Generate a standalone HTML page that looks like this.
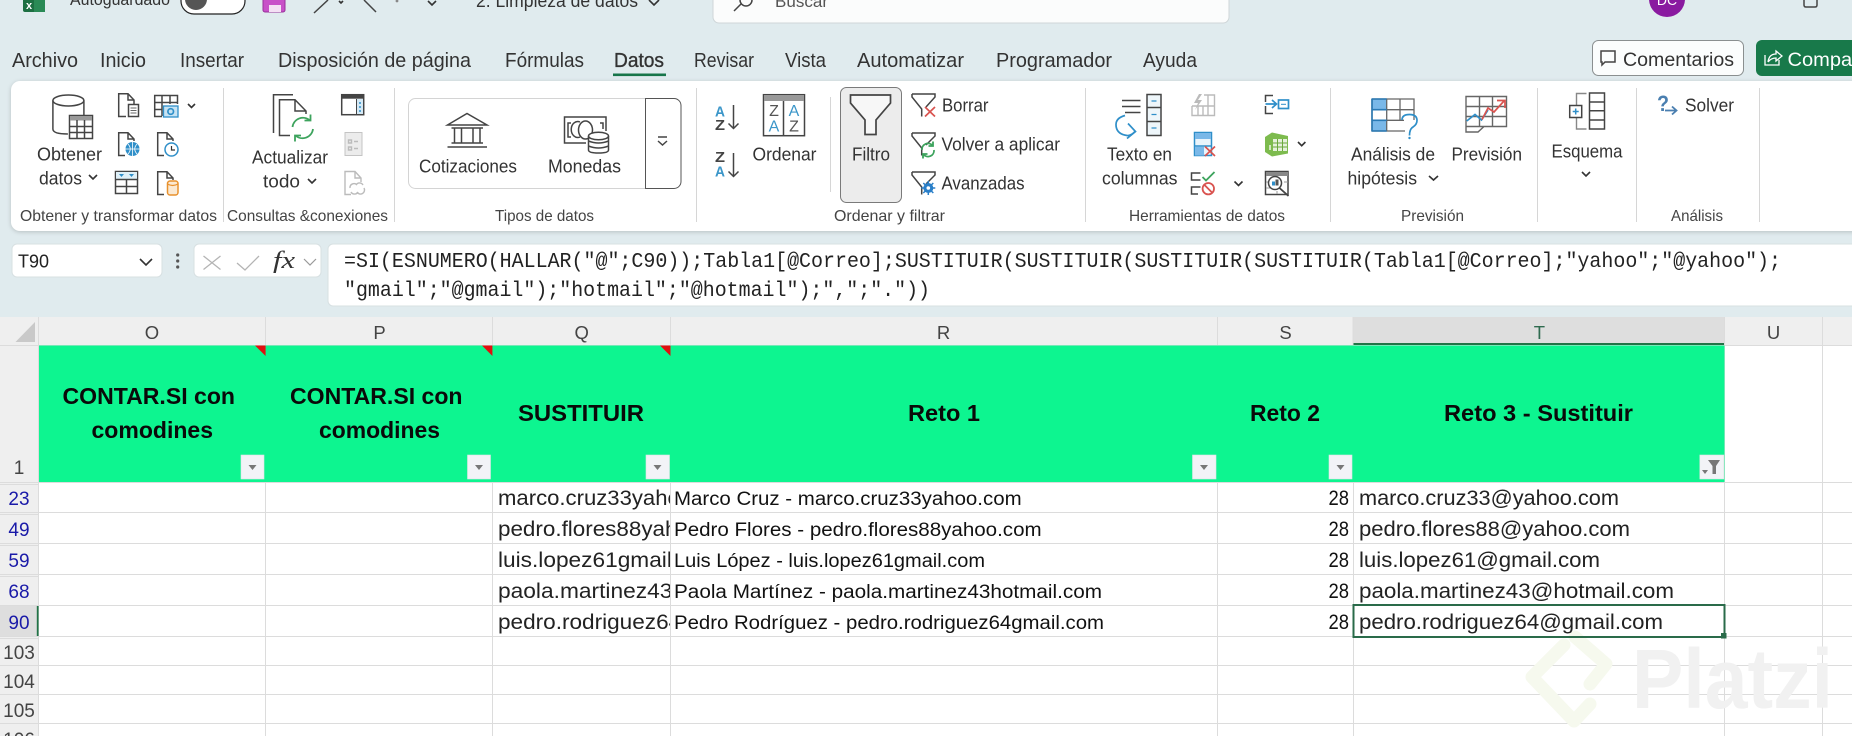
<!DOCTYPE html>
<html lang="es">
<head>
<meta charset="utf-8">
<title>Excel - Datos</title>
<style>
html,body{margin:0;padding:0;width:1852px;height:736px;overflow:hidden;background:#e0ebee}
svg{display:block;font-family:"Liberation Sans",sans-serif}
.tab{font-size:20px;fill:#333}
.btn{font-size:18px;fill:#333}
.grp{font-size:16px;fill:#444}
.mono{font-family:"Liberation Mono",monospace;font-size:21px;fill:#222}
.col{font-size:18.5px;fill:#444;text-anchor:middle}
.rh{font-size:19px;fill:#444;text-anchor:middle}
.rb{font-size:19px;fill:#1a1aa8;text-anchor:middle}
.hd{font-size:23px;font-weight:bold;fill:#0a0a0a}
.c{font-size:21px;fill:#222}
.r{font-size:19px;fill:#111}
.i{fill:none;stroke:#444;stroke-width:1.5}
.b{fill:none;stroke:#2f8fc9;stroke-width:1.7}
.g{fill:none;stroke:#3da35d;stroke-width:1.8}
.ch{fill:none;stroke:#333;stroke-width:1.6}
.gy{fill:none;stroke:#bbb;stroke-width:1.4}
.rd{fill:none;stroke:#d9534f;stroke-width:1.7}
.grid{stroke:#dcdcdc;stroke-width:1}
</style>
</head>
<body>
<svg width="1852" height="736" viewBox="0 0 1852 736" xmlns="http://www.w3.org/2000/svg">
<defs>
<clipPath id="qc"><rect x="493" y="483" width="177" height="155"/></clipPath>
</defs>
<rect width="1852" height="736" fill="#e0ebee"/>

<!-- Title bar -->
<rect x="23" y="-8" width="22" height="20" rx="2" fill="#1d6f42"/>
<rect x="34" y="-8" width="11" height="20" fill="#2a8a55"/>
<text x="26" y="9" font-size="11" font-weight="bold" fill="#fff">x</text>
<text x="70" y="5" font-size="17" fill="#333" textLength="100" lengthAdjust="spacingAndGlyphs">Autoguardado</text>
<rect x="181" y="-12" width="64" height="26" rx="13" fill="#fff" stroke="#222" stroke-width="1.2"/>
<circle cx="196" cy="-1" r="11" fill="#555"/>
<rect x="263" y="-8" width="22" height="20" rx="2" fill="#c850c8" stroke="#98309a"/>
<rect x="269" y="5" width="12" height="7" fill="#f4e0f4"/>
<path class="i" d="M314 13L328 0M364 0L376 12"/>
<path class="ch" d="M339 1l2 2 2-2"/>
<circle cx="397" cy="1" r="1.4" fill="#888"/>
<path class="ch" d="M428 1l4 4 4-4"/>
<text x="476" y="7" font-size="18" fill="#333" textLength="162" lengthAdjust="spacingAndGlyphs">2. Limpieza de datos</text>
<path class="ch" d="M649 0l5 5 5-5"/>
<rect x="713" y="-12" width="516" height="35" rx="6" fill="#fbfcfc" stroke="#cfd6d8"/>
<path class="i" d="M734 11l7-7"/><circle cx="746" cy="0" r="6" class="i"/>
<text x="775" y="7" font-size="17" fill="#555" textLength="53" lengthAdjust="spacingAndGlyphs">Buscar</text>
<circle cx="1667" cy="-1" r="18" fill="#8a1aa0"/>
<text x="1667" y="5" font-size="14" fill="#fff" text-anchor="middle">DC</text>
<path class="i" d="M1804 0v5q0 2 2 2h9q2 0 2-2v-5"/>

<!-- Tabs -->
<text class="tab" x="12" y="67" textLength="66" lengthAdjust="spacingAndGlyphs">Archivo</text>
<text class="tab" x="100" y="67" textLength="46" lengthAdjust="spacingAndGlyphs">Inicio</text>
<text class="tab" x="180" y="67" textLength="64" lengthAdjust="spacingAndGlyphs">Insertar</text>
<text class="tab" x="278" y="67" textLength="193" lengthAdjust="spacingAndGlyphs">Disposición de página</text>
<text class="tab" x="505" y="67" textLength="79" lengthAdjust="spacingAndGlyphs">Fórmulas</text>
<text class="tab" x="614" y="67" textLength="50" lengthAdjust="spacingAndGlyphs" stroke="#333" stroke-width=".35">Datos</text>
<rect x="613" y="73.5" width="53" height="2.6" fill="#17754a"/>
<text class="tab" x="694" y="67" textLength="60" lengthAdjust="spacingAndGlyphs">Revisar</text>
<text class="tab" x="785" y="67" textLength="41" lengthAdjust="spacingAndGlyphs">Vista</text>
<text class="tab" x="857" y="67" textLength="107" lengthAdjust="spacingAndGlyphs">Automatizar</text>
<text class="tab" x="996" y="67" textLength="116" lengthAdjust="spacingAndGlyphs">Programador</text>
<text class="tab" x="1143" y="67" textLength="54" lengthAdjust="spacingAndGlyphs">Ayuda</text>

<!-- Comments / share -->
<rect x="1592.5" y="40.5" width="151" height="35" rx="6" fill="#fbfdfd" stroke="#8a8f90"/>
<path class="i" d="M1601 51h14v11h-10l-3 3v-3h-1z"/>
<text x="1623" y="66" font-size="19" fill="#333" textLength="111" lengthAdjust="spacingAndGlyphs">Comentarios</text>
<rect x="1756" y="40" width="110" height="36" rx="6" fill="#18794a"/>
<path d="M1765 55v10h14v-5M1768 62q1-8 8-8v-3l6 5-6 5v-3q-5 0-8 4" fill="none" stroke="#fff" stroke-width="1.3"/>
<text x="1787.5" y="66" font-size="19" fill="#fff" textLength="88" lengthAdjust="spacingAndGlyphs">Compartir</text>

<!-- Ribbon panel -->
<rect x="11" y="81" width="1860" height="150" rx="9" fill="#fff" style="filter:drop-shadow(0 1px 2px rgba(0,0,0,.18))"/>
<g stroke="#d6d6d6" stroke-width="1">
<path d="M223.5 88V222M394.5 88V222M696.5 88V222M1085.5 88V222M1330.5 88V222M1537.5 88V222M1636.5 88V222M1759.5 88V222M830.5 97V192"/>
</g>

<!-- Group labels -->
<text class="grp" x="20" y="221" textLength="197" lengthAdjust="spacingAndGlyphs">Obtener y transformar datos</text>
<text class="grp" x="227" y="221" textLength="161" lengthAdjust="spacingAndGlyphs">Consultas &amp;conexiones</text>
<text class="grp" x="495" y="221" textLength="99" lengthAdjust="spacingAndGlyphs">Tipos de datos</text>
<text class="grp" x="834" y="221" textLength="111" lengthAdjust="spacingAndGlyphs">Ordenar y filtrar</text>
<text class="grp" x="1129" y="221" textLength="156" lengthAdjust="spacingAndGlyphs">Herramientas de datos</text>
<text class="grp" x="1401" y="221" textLength="63" lengthAdjust="spacingAndGlyphs">Previsión</text>
<text class="grp" x="1671" y="221" textLength="52" lengthAdjust="spacingAndGlyphs">Análisis</text>

<!-- Button labels -->
<text class="btn" x="37" y="160.500" textLength="65" lengthAdjust="spacingAndGlyphs">Obtener</text>
<text class="btn" x="39" y="184.500" textLength="43" lengthAdjust="spacingAndGlyphs">datos</text>
<path class="ch" d="M89 175l4 4 4-4"/>
<text class="btn" x="252" y="163.500" textLength="76" lengthAdjust="spacingAndGlyphs">Actualizar</text>
<text class="btn" x="263" y="187.500" textLength="37" lengthAdjust="spacingAndGlyphs">todo</text>
<path class="ch" d="M308 179l4 4 4-4"/>

<rect x="408.5" y="98.5" width="272" height="90" rx="7" fill="#fff" stroke="#d4d4d4"/>
<path d="M645.5 98.5H674a7 7 0 0 1 7 7V181.500a7 7 0 0 1-7 7H645.5z" fill="#fff" stroke="#555"/>
<path class="i" d="M658 137h9M658 141l4.500 4 4.500-4"/>
<text class="btn" x="419" y="172.500" textLength="98" lengthAdjust="spacingAndGlyphs">Cotizaciones</text>
<text class="btn" x="548" y="172.500" textLength="73" lengthAdjust="spacingAndGlyphs">Monedas</text>

<text class="btn" x="752.500" y="160.500" textLength="64" lengthAdjust="spacingAndGlyphs">Ordenar</text>
<rect x="840.500" y="87.500" width="61" height="115" rx="6" fill="#ececec" stroke="#7a7a7a"/>
<text class="btn" x="852" y="160.500" textLength="38" lengthAdjust="spacingAndGlyphs">Filtro</text>
<text class="btn" x="942" y="111.500" textLength="46.500" lengthAdjust="spacingAndGlyphs">Borrar</text>
<text class="btn" x="941.500" y="150.500" textLength="118.500" lengthAdjust="spacingAndGlyphs">Volver a aplicar</text>
<text class="btn" x="941.500" y="189.500" textLength="83" lengthAdjust="spacingAndGlyphs">Avanzadas</text>
<text class="btn" x="1107" y="160.500" textLength="65" lengthAdjust="spacingAndGlyphs">Texto en</text>
<text class="btn" x="1102" y="184.500" textLength="75.500" lengthAdjust="spacingAndGlyphs">columnas</text>
<text class="btn" x="1351" y="160.500" textLength="84" lengthAdjust="spacingAndGlyphs">Análisis de</text>
<text class="btn" x="1347.500" y="184.500" textLength="69.500" lengthAdjust="spacingAndGlyphs">hipótesis</text>
<path class="ch" d="M1429 176l4.500 4 4.500-4"/>
<text class="btn" x="1451.500" y="160.500" textLength="70.500" lengthAdjust="spacingAndGlyphs">Previsión</text>
<text class="btn" x="1551.500" y="157.500" textLength="71" lengthAdjust="spacingAndGlyphs">Esquema</text>
<path class="ch" d="M1582 172l4 4 4-4"/>
<text class="btn" x="1685" y="111.500" textLength="49" lengthAdjust="spacingAndGlyphs">Solver</text>

<!-- Obtener datos icon -->
<ellipse cx="68.400" cy="100.500" rx="15.500" ry="5.500" class="i"/>
<path class="i" d="M52.900 100.500V129q0 5 15 5M83.900 100.500V115"/>
<rect x="69.500" y="115.500" width="23" height="23" fill="#fff" stroke="#444" stroke-width="1.500"/>
<rect x="70" y="116" width="22" height="4.500" fill="#999"/>
<path class="i" d="M70 126.500H92M70 132.500H92M77 120V138M84.500 120V138"/>

<!-- Small data icons -->
<path class="i" d="M126 116.500H118.700V93.700H128L134 100V104"/>
<path class="i" d="M128 93.700V100H134"/>
<rect x="128.500" y="104.500" width="10" height="12" class="i"/>
<path d="M130.500 108h6M130.500 110.500h6M130.500 113h6" stroke="#666" fill="none"/>

<path class="i" d="M162 116.500H154.700V95.500H177.500V104M154.700 102.500H177.500M162 95.500V116M170 95.500V104M154.700 109.500H162"/>
<rect x="163.500" y="106" width="14.500" height="11" fill="#c7e3f3" stroke="#2f8fc9" stroke-width="1.300"/>
<circle cx="170.700" cy="111.500" r="2.800" class="b"/>
<path class="ch" d="M188 104l3.500 3.500 3.500-3.500"/>

<path class="i" d="M125 155.500H118.700V132.700H128L134 139V141M128 132.700V139H134"/>
<circle cx="132.500" cy="149" r="7" fill="#2f8fc9"/>
<path d="M125.500 149h14M132.500 142v14M128 144q4.500 5 0 10M137 144q-4.500 5 0 10" fill="none" stroke="#fff" stroke-width=".8"/>

<path class="i" d="M164 155.500H157.700V132.700H167L173 139V141M167 132.700V139H173"/>
<circle cx="171.500" cy="149.500" r="6.500" fill="#fff" stroke="#2f8fc9" stroke-width="1.500"/>
<path d="M171.500 146v4h3.500" fill="none" stroke="#333" stroke-width="1.200"/>

<rect x="115.500" y="171.500" width="22" height="22" class="i"/>
<rect x="116" y="172" width="21" height="7" fill="#dff0f8"/>
<path d="M119 174h5l-2.500 3zM129 174h5l-2.500 3z" fill="#2f8fc9"/>
<path class="i" d="M115.500 179.500H137.500M115.500 186.500H137.500M126.500 179.500V193.500"/>

<path class="i" d="M164 194.500H157.700V171.700H167L173 178V180M167 171.700V178H173"/>
<rect x="167.500" y="181" width="10.500" height="14" rx="2.500" fill="#fbe9d2" stroke="#e8912d" stroke-width="1.500"/>
<path d="M167.500 184q5 3 10.500 0" fill="none" stroke="#e8912d" stroke-width="1.200"/>

<!-- Actualizar icon -->
<path class="i" d="M293 94.700H273.500V133"/>
<path class="i" d="M290 135.500H279.500V99.700H295L306 111V114M295 99.700V111H306"/>
<path class="g" d="M292.500 127A10.500 10.500 0 0 1 310 120.500M313 129A10.500 10.500 0 0 1 295.500 135.500"/>
<path class="g" d="M310.500 114.500V120.500H304.500M295 141.500V135.500H301"/>
<rect x="341.700" y="94.700" width="22" height="20" class="i"/>
<rect x="341.700" y="94.700" width="22" height="4" fill="#444"/>
<path d="M356.500 99V114" stroke="#444" fill="none"/>
<rect x="357" y="99" width="6" height="15" fill="#d5e9f5"/>
<path d="M360 102v2M360 106v2M360 110v2" stroke="#2f8fc9" stroke-width="1.500" fill="none"/>
<rect x="345" y="132.500" width="17" height="23" fill="#ececec" stroke="#c4c4c4"/>
<path class="gy" d="M348.500 140h3v3h-3zM348.500 147h3v3h-3zM354 141.500h4M354 148.500h4"/>
<path class="gy" d="M351 194.500H345V171.500H355L361 178V182M355 171.500V178H361"/>
<path class="gy" d="M350 188a4 4 0 0 1 7-3M364 188a4 4 0 0 1-7 4M356 185a4 4 0 0 1 7 0M358 192a4 4 0 0 1-7 0"/>

<!-- Temple -->
<path class="i" d="M447.500 125L467 113.500L487 125H447.500Z" stroke-width="1.700"/>
<path class="i" d="M451.500 128H483M454.500 128V143M461.500 128V143M473 128V143M480 128V143M451.500 143H483M447.500 147H487" stroke-width="1.700"/>

<!-- Monedas -->
<path class="i" d="M586 143H564.500V117H606V131"/>
<path class="i" d="M571 123H568V137H571M600 123H603V129M580 122a6.500 8 0 1 0 0 15"/>
<ellipse cx="585.500" cy="130" rx="7" ry="9" class="i"/>
<ellipse cx="598.500" cy="136" rx="10" ry="3.800" fill="#fff" stroke="#444" stroke-width="1.500"/>
<path class="i" d="M588.500 136V150q0 3 10 3t10-3V136M588.500 141q10 4 20 0M588.500 146q10 4 20 0" fill="#fff"/>

<!-- Sort -->
<text x="715" y="116.500" font-size="15" font-weight="bold" fill="#3b96c9" textLength="10" lengthAdjust="spacingAndGlyphs">A</text>
<text x="715" y="130" font-size="15" font-weight="bold" fill="#444" textLength="10" lengthAdjust="spacingAndGlyphs">Z</text>
<path class="i" d="M733.500 105V128.500M728.500 123.500L733.500 128.500L738.500 123.500"/>
<text x="715" y="162" font-size="15" font-weight="bold" fill="#444" textLength="10" lengthAdjust="spacingAndGlyphs">Z</text>
<text x="715" y="176.500" font-size="15" font-weight="bold" fill="#3b96c9" textLength="10" lengthAdjust="spacingAndGlyphs">A</text>
<path class="i" d="M733.500 153V176.500M728.500 171.500L733.500 176.500L738.500 171.500"/>

<rect x="763.500" y="94.700" width="41" height="41" fill="#fff" stroke="#444" stroke-width="1.500"/>
<rect x="764" y="95" width="40" height="6" fill="#999"/>
<path d="M783.500 101V135" stroke="#444" stroke-width="1.500"/>
<g font-size="16" text-anchor="middle">
<text x="774" y="116" fill="#555">Z</text><text x="774" y="131.500" fill="#3b96c9">A</text>
<text x="794" y="116" fill="#3b96c9">A</text><text x="794" y="131.500" fill="#555">Z</text>
</g>

<!-- Funnels -->
<path d="M850.500 95H890.500V103L876 120V134.500H865V120L850.500 103Z" fill="#f7f7f7" stroke="#444" stroke-width="1.700"/>
<g class="i">
<path d="M912 94H935V97L926 107M912 94V97L921.700 109V116.500"/>
<path d="M912 133H935V136L926 145M912 133V136L921.700 148V155.500"/>
<path d="M912 172H935V175L926 184M912 172V175L921.700 187V194.500"/>
</g>
<path class="rd" d="M925 107L935 116.500M935 107L925 116.500"/>
<path class="g" d="M922 150A6 6 0 0 1 932.500 145.500M934 150A6 6 0 0 1 923.500 154.500M933 141.500V146H928.500M923 158.500V154H927.500"/>
<circle cx="928.300" cy="188" r="3.500" fill="none" stroke="#2a7fc8" stroke-width="3"/>
<path d="M928.300 181v14M921.300 188h14M923.300 183l10 10M933.300 183l-10 10" stroke="#2a7fc8" stroke-width="1.500"/>
<circle cx="928.300" cy="188" r="1.800" fill="#fff"/>

<!-- Texto en columnas -->
<path class="i" d="M1122 100.500H1140.500M1122 106.500H1140.500M1125 112.500H1140.500"/>
<rect x="1147" y="94.500" width="14" height="41" fill="#eef6fa" stroke="#444" stroke-width="1.500"/>
<path class="i" d="M1147 107.500H1161M1147 121.500H1161"/>
<path d="M1151.500 101h5M1151.500 114.500h5M1151.500 128h5" stroke="#2f8fc9" stroke-width="1.300"/>
<path class="b" d="M1125 115.500Q1116 118 1116 124.500Q1116 134 1127 135.500Q1131 136 1135 131.500M1128 123.500L1135.500 131.500L1127 138.500"/>

<!-- Flash fill -->
<path class="gy" d="M1204 95H1214.500V115.500H1192V106M1192 106H1214.500M1203 106V115.500M1208 95V115.500M1198 106V115.500" stroke-width="1.500"/>
<path d="M1199 94l-5 9h4l-3 7 7-10h-4l4-6z" fill="#bbb"/>

<!-- Remove duplicates -->
<rect x="1194.500" y="132.500" width="17" height="23" fill="#eaf4fb" stroke="#2f8fc9" stroke-width="1.500"/>
<rect x="1195" y="133" width="16" height="6" fill="#7ab8e8"/>
<path d="M1195 146h16" stroke="#2f8fc9" stroke-width="1.500"/>
<rect x="1195" y="146.500" width="9" height="9" fill="#7ab8e8"/>
<path class="rd" d="M1205 146.500L1215 156M1215 146.500L1205 156"/>

<!-- Validation -->
<path class="i" d="M1200.500 173H1191.500V180H1200.500M1200.500 187H1191.500V194H1198"/>
<path class="g" d="M1202.500 177L1206 180.500L1214.500 172"/>
<circle cx="1208.300" cy="188.700" r="5.700" fill="none" stroke="#d9534f" stroke-width="1.800"/>
<path d="M1204.500 185L1212 192.500" stroke="#d9534f" stroke-width="1.800"/>
<path class="ch" d="M1234.500 181.500l4 4 4-4"/>

<!-- Consolidate -->
<path class="i" d="M1273 95.500H1265.500V102M1265.500 106V113.500H1273"/>
<path class="b" d="M1265.500 104H1276M1272 100L1276.500 104L1272 108"/>
<rect x="1278.500" y="100" width="10" height="8.500" class="b"/>
<path d="M1281 104.300h5" stroke="#2f8fc9"/>

<!-- Data model -->
<path d="M1272 132.500L1288 136V153.500L1272 156.500L1265 152V137Z" fill="#7dbb4e"/>
<rect x="1273" y="139" width="14" height="12" fill="#fff" opacity=".8"/>
<path d="M1277.500 139v12M1282.500 139v12M1273 143h14M1273 147h14" stroke="#6aa83c"/>
<path d="M1270 145v5" stroke="#fff" stroke-width="1.300"/>
<path class="ch" d="M1298 142l3.700 3.700 3.700-3.700"/>

<!-- Relationships -->
<rect x="1265.500" y="171.500" width="22.500" height="23" class="i"/>
<rect x="1266" y="172" width="22" height="4" fill="#888"/>
<path d="M1266 182h4M1266 188h4M1284 182h4M1277 191v3" stroke="#999"/>
<circle cx="1275" cy="183" r="6.500" fill="#fff" stroke="#444" stroke-width="1.500"/>
<rect x="1272" y="181.500" width="3" height="4" fill="#2f8fc9"/><rect x="1275.500" y="179.500" width="3" height="6" fill="#555"/>
<path d="M1279.500 188L1288.500 196" stroke="#444" stroke-width="1.800"/>

<!-- What-if -->
<path d="M1372 99H1386.700V109.700H1372ZM1372 120.300H1386.700V131H1372Z" fill="#7ab8e8"/>
<path d="M1372 99H1414V120M1372 99V131H1405M1372 109.700H1414M1372 120.300H1404M1386.700 99V131M1400 99V120" fill="none" stroke="#666" stroke-width="1.300"/>
<path d="M1372 98.500V131.500M1372 99H1386.700M1372 131H1386.700M1372 109.700H1386.700M1372 120.300H1386.700" fill="none" stroke="#2a7ab5" stroke-width="1.600"/>
<path class="b" d="M1402 120Q1402 114.500 1409.500 114.500Q1417 114.500 1417 120.500Q1417 124.500 1413 127Q1409.500 129 1409.500 135.500" stroke-width="2"/>
<circle cx="1409.500" cy="138" r="1.200" fill="#2f8fc9"/>

<!-- Forecast -->
<path d="M1477 126.500H1506.500V96.500H1466V132H1478L1484 126.500M1466 126.500H1484M1466 106.500H1506.500M1466 116.500H1506.500M1479.500 96.500V126.500M1492.500 96.500V126.500" fill="none" stroke="#666" stroke-width="1.400"/>
<path class="b" d="M1466.700 121L1475 114.500L1481.500 120L1488 110"/>
<path class="rd" d="M1482 119.500L1488 108L1494 112L1504 101M1497 100.500H1505V108"/>

<!-- Outline -->
<path d="M1586.500 93.500H1576.500V105M1576.500 117.500V129H1586.500" fill="none" stroke="#888" stroke-width="1.400"/>
<rect x="1569.700" y="105.500" width="12" height="12" fill="#fff" stroke="#444" stroke-width="1.500"/>
<path d="M1572.700 111.500h6M1575.700 108.500v6" stroke="#2f8fc9" stroke-width="1.500"/>
<rect x="1589.500" y="93" width="15" height="36" class="i"/>
<path class="i" d="M1589.500 102H1604.500M1589.500 110.700H1604.500M1589.500 120H1604.500"/>

<!-- Solver -->
<text x="1657" y="111" font-size="22" font-weight="bold" fill="#4a7fb0" textLength="12" lengthAdjust="spacingAndGlyphs">?</text>
<path d="M1665 110.500H1676M1672 106.500L1676.500 110.500L1672 114.500" fill="none" stroke="#4a7fb0" stroke-width="1.800"/>

<!-- Formula bar -->
<rect x="12" y="244" width="150" height="33" rx="5" fill="#fff" stroke="#d7e0e2"/>
<text x="18" y="267.500" font-size="18" fill="#222" textLength="31" lengthAdjust="spacingAndGlyphs">T90</text>
<path class="ch" d="M140 259l6 6 6-6"/>
<g fill="#555"><circle cx="177.700" cy="255" r="1.600"/><circle cx="177.700" cy="261" r="1.600"/><circle cx="177.700" cy="267" r="1.600"/></g>
<rect x="194" y="244" width="127" height="33" rx="5" fill="#fff" stroke="#d7e0e2"/>
<path d="M203.500 256L220.500 269.500M220.500 256L203.500 269.500M237 263L245 270L259 256" fill="none" stroke="#b4b4b4" stroke-width="1.300"/>
<text x="273" y="268" font-family="Liberation Serif,serif" font-style="italic" font-size="24" fill="#333" textLength="22" lengthAdjust="spacingAndGlyphs">fx</text>
<path d="M304 259l6 6 6-6" fill="none" stroke="#999" stroke-width="1.200"/>
<rect x="328" y="244" width="1540" height="62" rx="5" fill="#fff" stroke="#d7e0e2"/>
<text class="mono" x="344" y="267" textLength="1437" lengthAdjust="spacingAndGlyphs">=SI(ESNUMERO(HALLAR("@";C90));Tabla1[@Correo];SUSTITUIR(SUSTITUIR(SUSTITUIR(SUSTITUIR(Tabla1[@Correo];"yahoo";"@yahoo");</text>
<text class="mono" x="344" y="296" textLength="586" lengthAdjust="spacingAndGlyphs">"gmail";"@gmail");"hotmail";"@hotmail");",";"."))</text>

<!-- Sheet -->
<rect x="0" y="317" width="1852" height="419" fill="#fff"/>
<rect x="0" y="317" width="1852" height="28" fill="#efefef"/>
<rect x="0" y="317" width="38" height="419" fill="#efefef"/>
<path d="M35 322V342H15.500Z" fill="#c9c9c9"/>
<rect x="1353" y="317" width="371.500" height="28" fill="#dedede"/>
<rect x="1353" y="343" width="371.500" height="2.200" fill="#217346"/>

<!-- gridlines -->
<g class="grid">
<path d="M38.500 317V736M265.500 317V345M492.500 317V345M670.500 317V345M1217.500 317V345M1353 317V345M1724.500 317V736M1822.500 317V736"/>
<path d="M265.500 482V736M492.500 482V736M670.500 482V736M1217.500 482V736M1353.500 482V736"/>
<path d="M0 345.500H1852M0 482.500H1852M0 512.500H1852M0 543.500H1852M0 574.500H1852M0 605.500H1852M0 636.500H1852M0 665.500H1852M0 694.500H1852M0 723.500H1852"/>
<path d="M0 484.500H38M0 514.500H38M0 545.500H38M0 576.500H38M0 607.500H38M0 638.500H38"/>
</g>
<rect x="0" y="606" width="37" height="30" fill="#dedede"/>
<rect x="36.800" y="606" width="1.800" height="30" fill="#217346"/>

<!-- Watermark -->
<path d="M1575 637L1606 664L1590 684M1564 645L1532 677L1574 721L1590 704" fill="none" stroke="#f6f9ee" stroke-width="13" stroke-linejoin="round" stroke-linecap="round"/>
<text x="1632" y="708" font-size="84" font-weight="bold" fill="#f1f1f1" textLength="201" lengthAdjust="spacingAndGlyphs">Platzi</text>

<!-- Green header row -->
<rect x="39" y="345.500" width="1685.500" height="136.500" fill="#0df590"/>
<path d="M255 345.500H265.600V356Z" fill="#e01010"/>
<path d="M482 345.500H492.400V356Z" fill="#e01010"/>
<path d="M660 345.500H670.500V356Z" fill="#e01010"/>

<g>
<text class="hd" x="62.500" y="404" textLength="172.500" lengthAdjust="spacingAndGlyphs">CONTAR.SI con</text>
<text class="hd" x="91.500" y="438" textLength="121.500" lengthAdjust="spacingAndGlyphs">comodines</text>
<text class="hd" x="290" y="404" textLength="172.500" lengthAdjust="spacingAndGlyphs">CONTAR.SI con</text>
<text class="hd" x="319" y="438" textLength="121" lengthAdjust="spacingAndGlyphs">comodines</text>
<text class="hd" x="518" y="421" textLength="126" lengthAdjust="spacingAndGlyphs">SUSTITUIR</text>
<text class="hd" x="908" y="421" textLength="72" lengthAdjust="spacingAndGlyphs">Reto 1</text>
<text class="hd" x="1250" y="421" textLength="70" lengthAdjust="spacingAndGlyphs">Reto 2</text>
<text class="hd" x="1444" y="421" textLength="189" lengthAdjust="spacingAndGlyphs">Reto 3 - Sustituir</text>
</g>

<!-- Filter buttons -->
<g fill="#f2f3f7" stroke="#dfe3e6" stroke-width=".6">
<rect x="241" y="455" width="23" height="24"/>
<rect x="467.500" y="455" width="23" height="24"/>
<rect x="646" y="455" width="23.500" height="24"/>
<rect x="1192.500" y="455" width="23.500" height="24"/>
<rect x="1329" y="455" width="23" height="24"/>
<rect x="1699.800" y="455" width="24" height="24"/>
</g>
<g fill="#777">
<path d="M248.500 465h8l-4 5zM475 465h8l-4 5zM653.500 465h8l-4 5zM1200 465h8l-4 5zM1336.500 465h8l-4 5z"/>
<path d="M1708 460H1720L1716 466V474H1712.500V466ZM1702 470H1708L1705 474Z"/>
</g>

<!-- Column headers -->
<text class="col" x="152" y="339">O</text>
<text class="col" x="379.500" y="339">P</text>
<text class="col" x="581.700" y="339">Q</text>
<text class="col" x="943.600" y="339">R</text>
<text class="col" x="1285.600" y="339">S</text>
<text class="col" x="1539.400" y="339" style="fill:#2f6b4f">T</text>
<text class="col" x="1773.500" y="339">U</text>

<!-- Row headers -->
<text class="rh" x="19" y="474">1</text>
<text class="rb" x="19" y="505">23</text>
<text class="rb" x="19" y="536">49</text>
<text class="rb" x="19" y="567">59</text>
<text class="rb" x="19" y="598">68</text>
<text class="rb" x="19" y="629">90</text>
<text class="rh" x="19" y="659">103</text>
<text class="rh" x="19" y="688">104</text>
<text class="rh" x="19" y="717">105</text>
<text class="rh" x="19" y="746">106</text>

<!-- Q column (clipped) -->
<g clip-path="url(#qc)">
<text class="c" x="498" y="505" textLength="242" lengthAdjust="spacingAndGlyphs">marco.cruz33yahoo.com</text>
<text class="c" x="498" y="536" textLength="253" lengthAdjust="spacingAndGlyphs">pedro.flores88yahoo.com</text>
<text class="c" x="498" y="567" textLength="223" lengthAdjust="spacingAndGlyphs">luis.lopez61gmail.com</text>
<text class="c" x="498" y="598" textLength="297" lengthAdjust="spacingAndGlyphs">paola.martinez43hotmail.com</text>
<text class="c" x="498" y="629" textLength="286" lengthAdjust="spacingAndGlyphs">pedro.rodriguez64gmail.com</text>
</g>

<!-- R column -->
<text class="r" x="674" y="505" textLength="347.600" lengthAdjust="spacingAndGlyphs">Marco Cruz - marco.cruz33yahoo.com</text>
<text class="r" x="674" y="536" textLength="367.600" lengthAdjust="spacingAndGlyphs">Pedro Flores - pedro.flores88yahoo.com</text>
<text class="r" x="674" y="567" textLength="311" lengthAdjust="spacingAndGlyphs">Luis López - luis.lopez61gmail.com</text>
<text class="r" x="674" y="598" textLength="428" lengthAdjust="spacingAndGlyphs">Paola Martínez - paola.martinez43hotmail.com</text>
<text class="r" x="674" y="629" textLength="430" lengthAdjust="spacingAndGlyphs">Pedro Rodríguez - pedro.rodriguez64gmail.com</text>

<!-- S column -->
<g class="c" text-anchor="end" style="fill:#111">
<text x="1349" y="505" textLength="20.500" lengthAdjust="spacingAndGlyphs">28</text><text x="1349" y="536" textLength="20.500" lengthAdjust="spacingAndGlyphs">28</text><text x="1349" y="567" textLength="20.500" lengthAdjust="spacingAndGlyphs">28</text><text x="1349" y="598" textLength="20.500" lengthAdjust="spacingAndGlyphs">28</text><text x="1349" y="629" textLength="20.500" lengthAdjust="spacingAndGlyphs">28</text>
</g>

<!-- T column -->
<text class="c" x="1359" y="505" textLength="260" lengthAdjust="spacingAndGlyphs">marco.cruz33@yahoo.com</text>
<text class="c" x="1359" y="536" textLength="271" lengthAdjust="spacingAndGlyphs">pedro.flores88@yahoo.com</text>
<text class="c" x="1359" y="567" textLength="241" lengthAdjust="spacingAndGlyphs">luis.lopez61@gmail.com</text>
<text class="c" x="1359" y="598" textLength="315" lengthAdjust="spacingAndGlyphs">paola.martinez43@hotmail.com</text>
<text class="c" x="1359" y="629" textLength="304" lengthAdjust="spacingAndGlyphs">pedro.rodriguez64@gmail.com</text>

<!-- Selection -->
<rect x="1353.500" y="605" width="371" height="32" fill="none" stroke="#2a6b4a" stroke-width="2"/>
<rect x="1721" y="633" width="5.500" height="5.500" fill="#2a6b4a"/>
</svg>
</body>
</html>
